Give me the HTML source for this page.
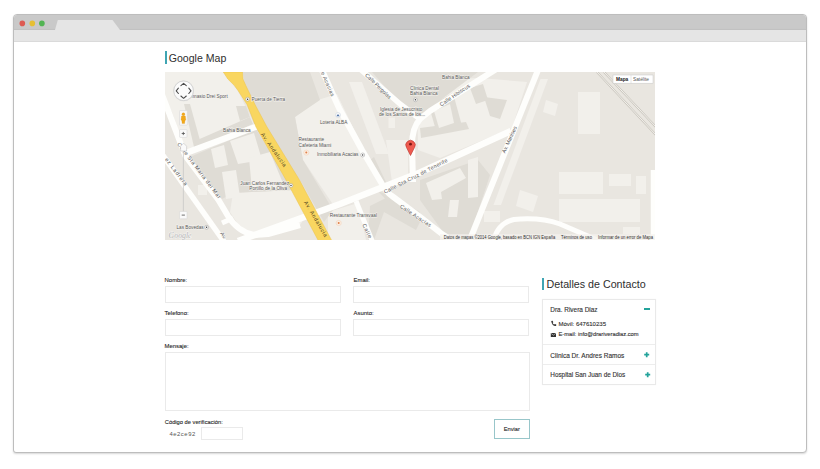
<!DOCTYPE html>
<html><head><meta charset="utf-8">
<style>
html,body{margin:0;padding:0;background:#fff;width:820px;height:469px;overflow:hidden;font-family:"Liberation Sans",sans-serif;}
.abs{position:absolute;}
#frame{position:absolute;left:13px;top:14px;width:792px;height:437px;border:1px solid #bdbdbd;border-radius:4px 4px 4px 3px;box-shadow:0 1px 2px rgba(0,0,0,0.16);background:#fff;overflow:hidden;}
#topbar{position:absolute;left:0;top:0;width:792px;height:15px;background:#c9c9c9;box-shadow:inset 0 -1px 1px rgba(0,0,0,0.04);}
#toolbar{position:absolute;left:0;top:15px;width:792px;height:12px;background:#e5e5e5;border-bottom:0.5px solid #dadada;box-sizing:border-box;}
.dot{position:absolute;width:5.6px;height:5.6px;border-radius:50%;top:5.6px;}
.lbl{position:absolute;font-size:5.9px;color:#262626;white-space:nowrap;line-height:1;-webkit-text-stroke:0.1px #262626;}
.inp{position:absolute;border:1px solid #eaeaea;background:#fff;box-sizing:border-box;}
h2{margin:0;font-weight:normal;}
.ttl{position:absolute;color:#2e2e2e;white-space:nowrap;line-height:1;}
.bar{position:absolute;width:1.6px;background:#3fa5b3;}
.row{position:absolute;font-size:6.4px;color:#333;white-space:nowrap;line-height:1;-webkit-text-stroke:0.12px #333;}
.mt{font-size:4.6px;fill:#555;font-family:"Liberation Sans",sans-serif;}
</style></head>
<body>
<div id="frame">
  <div id="topbar"></div>
  <svg class="abs" style="left:41px;top:5.2px" width="66" height="10"><path d="M0 10 L2.8 0 L57.5 0 L65 10 Z" fill="#e5e5e5"/></svg>
  <div id="toolbar"></div>
  <svg class="abs" style="left:0;top:0" width="40" height="15"><circle cx="8.3" cy="8.4" r="2.8" fill="#dd5a52"/><circle cx="18.3" cy="8.4" r="2.8" fill="#e6bf34"/><circle cx="27.9" cy="8.4" r="2.8" fill="#52b453"/></svg>
</div>

<!-- Google Map heading -->
<div class="bar" style="left:165px;top:51px;height:13px;"></div>
<div class="ttl" style="left:168.8px;top:52.8px;font-size:10.55px;">Google Map</div>

<!-- MAP -->
<svg class="abs" style="left:165px;top:72px" width="490" height="168" viewBox="165 72 490 168">
  <rect x="165" y="72" width="490" height="168" fill="#e9e6e0"/>
  <!-- zones -->
  <g fill="#f2f0eb">
    <polygon points="165,72 223,72 238,91 254,124 188,153 185,150 172,112 165,104"/>
    <polygon points="233,193 294,190 306,216 300,225 268,232 250,233 238,224 230,212"/>
    <polygon points="295,117 318,100 337,94 381,186 334,206 303,160"/>
    <polygon points="349,82 362,82 389,154 376,154"/>
    <polygon points="386,140 408,140 408,176 392,182"/><polygon points="388.5,117.6 395,117.6 395,128 388.5,128"/>
    <polygon points="417,80 480,78 527,82 512,128 440,158 418,150"/>
    <polygon points="540.5,79 548,79 501,205 493.5,205"/>
    <polygon points="578,92 600,92 600,134 578,134"/>
    <polygon points="546,100 558,104 555,116 543,112"/>
    <polygon points="520,190 538,196 533,212 516,206"/>
    <polygon points="559,172 603,172 603,194 559,194"/>
    <polygon points="609,174 631,174 631,186 609,186"/>
    <polygon points="636,176 646,176 646,194 636,194"/>
    <polygon points="559,199 640,199 640,222 559,222"/>
    <polygon points="484,211 500,211 500,222 484,222"/><polygon points="623,227 640,227 640,234 623,234"/>
    <polygon points="328,212 358,203 366,240 328,240"/>
    
  </g>
  <g fill="#dfdcd5">
    <polygon points="184,104 190,104 201,144 194,147"/>
    <polygon points="195,141 250,117 253,124 197,149"/>
    <polygon points="236,106 246,106 250,117 240,121"/>
    <polygon points="190,157 256,129 294,190 233,193 222,199"/>
    <polygon points="243,72 310,72 320,100 295,117 303,160 333,210 324,222 300,180 256,129 247,104 245,86"/>
    <polygon points="372,72 478,72 430,108 418,119 400,104"/><polygon points="374,157 386,182 380,186 370,160"/><polygon points="378,191 396,198 420,212 418,222 392,206"/>
    <polygon points="420,180 478,160 490,175 470,236 446,236 420,200"/>
    <polygon points="470,88 483,84 488,100 476,104"/><polygon points="484,97 507,100 500,119 490,116"/><polygon points="429,106 453,93 462,126 437,134"/><polygon points="420,128 466,122 469,129 421,138"/>
    <polygon points="370,206 386,198 420,222 416,230 384,212 374,240 368,240"/>
  </g>
  <g fill="#f2f0eb">
    <polygon points="230,141 254,133 262,160 238,164"/>
    <polygon points="211,149 224,145 228,165 215,168"/>
    <polygon points="222,172 236,170 240,197 226,199"/>
    <polygon points="249,158 270,152 285,188 252,190"/>
    <polygon points="434,111 450,104 454,123 439,128"/><polygon points="426,183 460,168 466,178 441,192 442,199 432,200"/>
    <polygon points="450,200 459,200 457,217 448,217"/>
    <polygon points="468,160 478,157 478,197 468,198"/>
    <polygon points="198,185 207,185 207,195 198,195"/>
  </g>
  <!-- white roads -->
  <g stroke="#fefefc" fill="none" stroke-linejoin="round">
    <path d="M161 92 L185.5 156 L218.5 200 L228 216 Q238 232 254 235 L268 234 L300 225" stroke-width="6"/>
    <path d="M162 154 L225 243" stroke-width="5.5"/>
    <path d="M182 154.5 L258 126" stroke-width="6.2"/>
    <path d="M238 241 L340 204 L420 172.5 L511 131" stroke-width="6.5"/>
    <path d="M321 68 L339 108 L362 150 L382 184 Q386 192 392 196 L420 216.8 L442 234 L456 243" stroke-width="6"/>
    <path d="M359 68 L400 104 L420 119" stroke-width="5.5"/>
    <path d="M498 68 L430 111 L420 119 Q412 128 412 145 L413 182" stroke-width="6"/>
    <path d="M538 70 L469 242" stroke-width="6"/>
    <path d="M356 201 L373 243" stroke-width="5"/>
    <path d="M222 223 L233 218" stroke-width="5"/>
    <path d="M493 243 Q497 223 514 219.5 Q540 217 560 224 L604 243" stroke-width="5"/>
    <path d="M653 170 L653 243" stroke-width="4.5"/>
  </g>
  <!-- railway -->
  <g fill="none">
    <path d="M597 72 L656 135 M604 72 L656 127" stroke="#c9c5bd" stroke-width="2"/>
    <path d="M597 72 L656 135 M604 72 L656 127" stroke="#f7f6f2" stroke-width="0.9"/>
  </g>
  <!-- yellow avenue -->
  <path d="M223.3 72 L242.5 72 L243 79 L245.7 85.3 L255 104.5 L267 127 L299.5 180 L332 241 L318.5 241 L286 180 L256 127 L247 104.5 L238 90.5 L234.2 85.3 L227.8 79 Z" fill="#f9d660" stroke="#ecc24a" stroke-width="0.5"/>
  <!-- labels -->
  <g class="mt" style="font-size:4.7px" fill="#3a3a3a" stroke="#f6f4f0" stroke-width="0.9" paint-order="stroke">
  <text x="191.5" y="97.6">nnasio Drei Sport</text>
  <text x="251.5" y="100.7">Puerta de Tierra</text>
  <text x="223" y="131.6">Bahia Blanca</text>
  <text x="320" y="123.5">Loteria ALBA</text>
  <text x="298.6" y="141.3">Restaurante</text>
  <text x="298.6" y="146.5">Cafeteria Miami</text>
  <text x="317" y="156.3">Inmobiliaria Acacias</text>
  <text x="240.3" y="184.6">Juan Carlos Fernandez</text>
  <text x="249.3" y="189.5">Portillo de la Oliva</text>
  <text x="329.8" y="217">Restaurante Transvaal</text>
  <text x="176.5" y="228.6">Las Bovedas</text>
  <text x="380" y="110.5">Iglesia de Jesucristo</text>
  <text x="379" y="115.6">de los Santos de los...</text>
  <text x="410" y="89.9">Clinica Dental</text>
  <text x="410" y="95">Bahia Blanca</text>
  <text x="442" y="79.2">Bahia Blanca</text>
  </g>
  <g class="mt" style="font-size:5.4px" fill="#4a4a4a" stroke="#fdfcfa" stroke-width="0.6" paint-order="stroke">
  <text transform="translate(262.2,133.2) rotate(55) translate(0,1.9)" textLength="40.2" lengthAdjust="spacing" fill="#4d3f1f" stroke="none">Av. Andalucia</text>
  <text transform="translate(305.5,201.2) rotate(59.5) translate(0,1.9)" textLength="40.8" lengthAdjust="spacing" fill="#4d3f1f" stroke="none">Av. Andalucia</text>
  <text transform="translate(178.5,143) rotate(53) translate(0,1.9)" textLength="68.5" lengthAdjust="spacing">Calle Sta Maria del Mar</text>
  <text transform="translate(166.2,158.4) rotate(52.7) translate(0,1.9)" textLength="33.2" lengthAdjust="spacing">ez Ladrera</text>
  <text transform="translate(318,62.2) rotate(66) translate(0,1.9)" textLength="37" lengthAdjust="spacing">Calle Acacias</text>
  <text transform="translate(366.2,74.2) rotate(44.4) translate(0,1.9)" textLength="33.7" lengthAdjust="spacing">Calle Pergolas</text>
  <text transform="translate(440.3,104.8) rotate(-34) translate(0,1.9)" textLength="35.1" lengthAdjust="spacing">Calle Hibiscus</text>
  <text transform="translate(384.1,192.1) rotate(-27) translate(0,1.9)" textLength="70.6" lengthAdjust="spacing">Calle Sta Cruz de Tenerife</text>
  <text transform="translate(503.2,152.7) rotate(-65) translate(0,1.9)" textLength="29" lengthAdjust="spacing">Av. Manises</text>
  <text transform="translate(400.5,205.6) rotate(33.6) translate(0,1.9)" textLength="36.3" lengthAdjust="spacing">Calle Acacias</text>
  <text transform="translate(364,224) rotate(65) translate(0,1.9)" textLength="22" lengthAdjust="spacing">Calle C</text>
  <text transform="translate(221.5,232.5) rotate(55) translate(0,1.9)">Av.</text>
  </g>
  <g fill="#fff" stroke="#999" stroke-width="0.5">
    <circle cx="247.6" cy="99.2" r="1.9"/>
    <circle cx="291" cy="185.4" r="1.9"/>
    <circle cx="206.6" cy="227.3" r="1.9"/>
    <circle cx="362.7" cy="155" r="2"/>
    <circle cx="415.4" cy="99.8" r="1.9"/>
  </g>
  <g fill="#333"><circle cx="247.6" cy="99.2" r="0.7"/><circle cx="291" cy="185.4" r="0.7"/><circle cx="206.6" cy="227.3" r="0.7"/><circle cx="362.7" cy="155" r="0.7"/><circle cx="415.4" cy="99.8" r="0.7"/></g>
  <circle cx="338" cy="115" r="2.5" fill="#fbfbfb" stroke="#b8c4d4" stroke-width="0.4"/><path d="M336.4 116.3 l1.6 -2.2 l1.6 2.2z" fill="#4e72a8"/>
  <circle cx="306.3" cy="152.6" r="2.6" fill="#fbeee2" stroke="#f0c8a8" stroke-width="0.4"/><circle cx="306.3" cy="152.6" r="1" fill="#e0804a"/>
  <circle cx="338.7" cy="223" r="2.6" fill="#fbeee2" stroke="#f0c8a8" stroke-width="0.4"/><circle cx="338.7" cy="223" r="1" fill="#e0804a"/>
  <!-- marker -->
  <path d="M410.5 155.5 L406.5 147.5 A4.7 4.7 0 1 1 414.5 147.5 Z" fill="#ee5a4f" stroke="#b8342c" stroke-width="0.6"/>
  <circle cx="410.5" cy="144.2" r="1.4" fill="#7a1510"/>
  <!-- controls -->
  <circle cx="183.6" cy="90.8" r="10.4" fill="#d8d8d8" opacity="0.6"/>
  <circle cx="183.6" cy="90.8" r="9.8" fill="#fbfbfb" stroke="#c9c9c9" stroke-width="0.7"/>
  <g stroke="#4a4a4a" stroke-width="1.05" fill="none" stroke-linecap="round" stroke-linejoin="round">
    <path d="M180.9 85.6 L183.6 83.3 L186.3 85.6"/>
    <path d="M180.9 96 L183.6 98.3 L186.3 96"/>
    <path d="M178.4 88.1 L176.2 90.8 L178.4 93.5"/>
    <path d="M188.8 88.1 L191 90.8 L188.8 93.5"/>
  </g>
  <rect x="179.5" y="110.6" width="7.8" height="14.6" rx="0.6" fill="#f8f8f8" stroke="#d2d2d2" stroke-width="0.5"/>
  <g fill="#f2a91a" stroke="#d98c10" stroke-width="0.25">
    <circle cx="183.4" cy="114.3" r="1.45"/>
    <path d="M181.5 116 Q183.4 115.3 185.3 116 L185.8 120 L185 120.4 L184.6 123.6 L182.2 123.6 L181.8 120.4 L181 120 Z"/>
  </g>
  <rect x="179.6" y="129.6" width="7.4" height="7.8" rx="0.5" fill="#fafafa" stroke="#d2d2d2" stroke-width="0.5"/>
  <path d="M181.7 133.5 h3.2 M183.3 131.9 v3.2" stroke="#555" stroke-width="0.85"/>
  <line x1="183.4" y1="151" x2="183.4" y2="211.5" stroke="#c4c4c4" stroke-width="0.7"/>
  <path d="M180.6 146.2 L183.6 143.2 L186.6 146.2 L186.6 151 L180.6 151 Z" fill="#fafafa" stroke="#bdbdbd" stroke-width="0.5"/>
  <rect x="179.6" y="211.4" width="7.4" height="7.4" rx="0.5" fill="#fafafa" stroke="#d2d2d2" stroke-width="0.5"/>
  <path d="M181.7 215.1 h3.2" stroke="#555" stroke-width="0.85"/>
  <text x="168.6" y="237.6" style="font-size:7.4px;font-family:'Liberation Serif';font-style:italic;" textLength="23" lengthAdjust="spacingAndGlyphs" fill="#b5b5b5" stroke="#f7f7f7" stroke-width="0.8" paint-order="stroke">Google</text>
  <!-- map type -->
  <rect x="613" y="75" width="40" height="8.2" fill="#fff" stroke="#c8c8c8" stroke-width="0.5"/>
  <line x1="631" y1="75" x2="631" y2="83.2" stroke="#ccc" stroke-width="0.5"/>
  <text x="616" y="81.4" style="font-size:4.8px;font-weight:bold;font-family:'Liberation Sans';" fill="#222">Mapa</text>
  <text x="633" y="81.4" style="font-size:4.8px;font-family:'Liberation Sans';" fill="#555">Satélite</text>
  <!-- attribution -->
  <rect x="440" y="234.2" width="215" height="5.8" fill="#f4f2ee" opacity="0.75"/>
  <g style="font-size:4.7px;font-family:'Liberation Sans';" fill="#2a2a2a">
  <text x="443.7" y="238.8" textLength="111.5" lengthAdjust="spacingAndGlyphs">Datos de mapas ©2014 Google, basado en BCN IGN España</text>
  <text x="561" y="238.8" textLength="31" lengthAdjust="spacingAndGlyphs">Términos de uso</text>
  <text x="598" y="238.8" textLength="55" lengthAdjust="spacingAndGlyphs">Informar de un error de Mapa</text>
  </g>
</svg>

<!-- FORM -->
<div class="lbl" style="left:164.6px;top:277.9px;font-size:5.92px;">Nombre:</div>
<div class="inp" style="left:165px;top:285.5px;width:176px;height:17px;"></div>
<div class="lbl" style="left:353.6px;top:277.9px;font-size:5.92px;">Email:</div>
<div class="inp" style="left:353.4px;top:285.5px;width:176px;height:17px;"></div>
<div class="lbl" style="left:164.6px;top:311.2px;font-size:5.92px;">Telefono:</div>
<div class="inp" style="left:165px;top:318.8px;width:176px;height:17px;"></div>
<div class="lbl" style="left:353.6px;top:311.2px;font-size:5.92px;">Asunto:</div>
<div class="inp" style="left:353.4px;top:318.8px;width:176px;height:17px;"></div>
<div class="lbl" style="left:164.6px;top:344.2px;font-size:5.92px;">Mensaje:</div>
<div class="inp" style="left:165px;top:352px;width:365px;height:58.6px;"></div>
<div class="lbl" style="left:164.8px;top:420px;font-size:5.74px;">Código de verificación:</div>
<div class="lbl" style="left:169.4px;top:431.5px;font-size:5.9px;color:#555;letter-spacing:0.55px;-webkit-text-stroke:0;">4e2ce92</div>
<div class="inp" style="left:201px;top:427px;width:42px;height:13px;"></div>
<div class="abs" style="left:494px;top:419px;width:36px;height:20px;box-sizing:border-box;border:1px solid #98c6ca;"></div>
<div class="lbl" style="left:503.8px;top:427px;font-size:5.7px;">Enviar</div>

<!-- CONTACT -->
<div class="bar" style="left:542px;top:278px;height:12px;"></div>
<div class="ttl" style="left:546.5px;top:278.5px;font-size:10.7px;">Detalles de Contacto</div>
<div class="abs" style="left:542px;top:299px;width:114px;height:85.6px;box-sizing:border-box;border:1px solid #e9e9e9;box-shadow:0 0 1px rgba(0,0,0,0.06);"></div>
<div class="abs" style="left:543px;top:344.3px;width:112px;height:1.2px;background:#ededed;"></div>
<div class="abs" style="left:543px;top:364.2px;width:112px;height:1.2px;background:#ededed;"></div>
<div class="row" style="left:550.3px;top:306.5px;font-size:6.45px;">Dra. Rivera Diaz</div>
<div class="abs" style="left:644px;top:308.2px;width:6px;height:1.5px;background:#23a39b;"></div>
<div class="row" style="left:558.5px;top:320.6px;font-size:6.02px;">Móvil: 647610235</div>
<div class="row" style="left:558.5px;top:332.2px;font-size:5.74px;">E-mail: info@drariveradiaz.com</div>
<div class="row" style="left:550.3px;top:352.8px;font-size:6.5px;">Clinica Dr. Andres Ramos</div>
<div class="row" style="left:550.3px;top:372px;font-size:6.37px;">Hospital San Juan de Dios</div>
<svg class="abs" style="left:643.3px;top:351px" width="8" height="8"><path d="M3.7 1.2v5M1.2 3.7h5" stroke="#23a39b" stroke-width="1.7"/></svg>
<svg class="abs" style="left:643.5px;top:370.8px" width="8" height="8"><path d="M3.7 1.2v5M1.2 3.7h5" stroke="#23a39b" stroke-width="1.7"/></svg>
<svg class="abs" style="left:550px;top:320px" width="7" height="7"><path d="M1.2 1 L2.6 0.8 L3.3 2.3 L2.6 3 Q3.2 4.2 4.2 4.6 L4.9 3.9 L6.3 4.6 L6.1 6 Q2 6.4 1.2 1 Z" fill="#333"/></svg>
<svg class="abs" style="left:550px;top:331.5px" width="7" height="6"><rect x="0.8" y="1" width="5.2" height="4" fill="#333"/><path d="M0.8 1.2 L3.4 3.2 L6 1.2" stroke="#fff" stroke-width="0.5" fill="none"/></svg>
</body></html>
